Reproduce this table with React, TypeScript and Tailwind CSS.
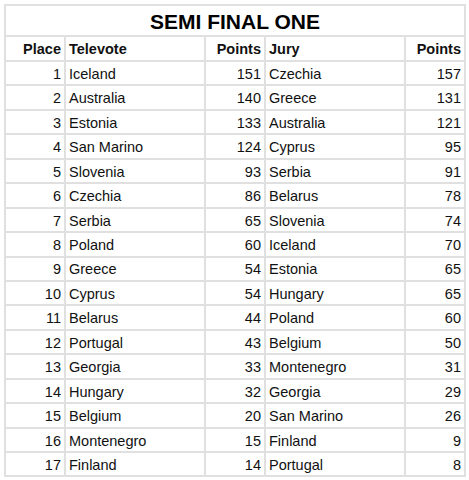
const rows: [number, string, number, string, number][] = [
  [1, 'Iceland', 151, 'Czechia', 157],
  [2, 'Australia', 140, 'Greece', 131],
  [3, 'Estonia', 133, 'Australia', 121],
  [4, 'San Marino', 124, 'Cyprus', 95],
  [5, 'Slovenia', 93, 'Serbia', 91],
  [6, 'Czechia', 86, 'Belarus', 78],
  [7, 'Serbia', 65, 'Slovenia', 74],
  [8, 'Poland', 60, 'Iceland', 70],
  [9, 'Greece', 54, 'Estonia', 65],
  [10, 'Cyprus', 54, 'Hungary', 65],
  [11, 'Belarus', 44, 'Poland', 60],
  [12, 'Portugal', 43, 'Belgium', 50],
  [13, 'Georgia', 33, 'Montenegro', 31],
  [14, 'Hungary', 32, 'Georgia', 29],
  [15, 'Belgium', 20, 'San Marino', 26],
  [16, 'Montenegro', 15, 'Finland', 9],
  [17, 'Finland', 14, 'Portugal', 8],
];

const cell = 'border-2 border-[#e0e0e0] px-[3px] pt-[2px] pb-0 leading-none';

export default function App() {
  return (
    <div className="w-[469px] h-[480px] bg-white pl-[4px] pt-[4px] font-['Liberation_Sans',Arial,sans-serif] text-[#111]">
      <table className="table-fixed border-collapse w-[460px]">
        <colgroup>
          <col className="w-[60px]" />
          <col className="w-[140px]" />
          <col className="w-[60px]" />
          <col className="w-[140px]" />
          <col className="w-[60px]" />
        </colgroup>
        <tbody>
          <tr className="h-[31px]">
            <td colSpan={5} className={`${cell} text-center text-[21px] font-bold text-black`}>
              SEMI FINAL ONE
            </td>
          </tr>
          <tr className="h-[25px] text-[14.5px] font-bold">
            <td className={`${cell} text-right`}>Place</td>
            <td className={`${cell} text-left`}>Televote</td>
            <td className={`${cell} text-right`}>Points</td>
            <td className={`${cell} text-left`}>Jury</td>
            <td className={`${cell} text-right`}>Points</td>
          </tr>
          {rows.map(([place, tv, tvPts, jury, juryPts]) => (
            <tr key={place} className="h-[24.45px] text-[14.5px]">
              <td className={`${cell} text-right`}>{place}</td>
              <td className={`${cell} text-left`}>{tv}</td>
              <td className={`${cell} text-right`}>{tvPts}</td>
              <td className={`${cell} text-left`}>{jury}</td>
              <td className={`${cell} text-right`}>{juryPts}</td>
            </tr>
          ))}
        </tbody>
      </table>
    </div>
  );
}
